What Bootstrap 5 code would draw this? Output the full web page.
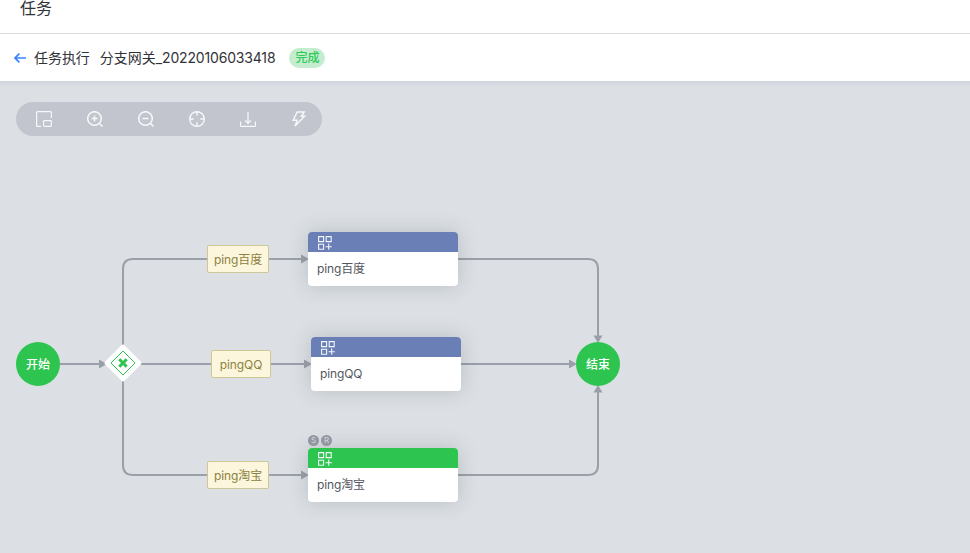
<!DOCTYPE html>
<html lang="zh-CN">
<head>
<meta charset="utf-8">
<meta name="viewport" content="width=device-width, initial-scale=1">
<title>任务执行</title>
<link href="https://cdn.jsdelivr.net/npm/bootstrap@5.3.0/dist/css/bootstrap.min.css" rel="stylesheet">
<style>
body { font-family: Inter, "Noto Sans CJK SC", sans-serif; color: #313238; background: #dce0e5; height: 100vh; overflow: hidden; }
.page-title { height: 34px; padding: 0 20px 17px; border-bottom: 1px solid #d9dbdf; font-size: 16px; line-height: 16px; }
.task-bar { height: 47px; padding: 0 14px; font-size: 14px; line-height: 20px; }
.task-bar .crumb { margin-left: 8px; letter-spacing: -.05px; }
.task-bar .task-name { margin-left: 10px; }
.task-bar .serial { letter-spacing: -.17px; }
.status-pill { width: 36px; height: 20px; margin-left: 14px; font-size: 12px; background: #c6ecd0; color: #2dcb56; font-weight: 500; }
.canvas { background: linear-gradient(#d0d5dd, #dce0e5 6px); }
.tools { width: 306px; height: 34px; margin: 21px 0 0 16px; padding: 0 15px 0 20px; background: #c2c5cd; }
.tools svg { fill: none; stroke: #f7f8fa; stroke-width: 1.2; }
.flow { position: absolute; inset: 0; }
.flow > * { position: absolute; }
.wires { left: 0; top: 0; }
.endpoint { width: 44px; height: 44px; background: #2dc550; color: #fff; font-size: 12px; font-weight: 500; line-height: 18px; top: 261px; padding-top: 1px; }
.start { left: 16px; }
.finish { left: 576px; }
.gateway { left: 104px; top: 263px; }
.branch { height: 28px; font-size: 12px; letter-spacing: -.1px; color: #8d8142; background: #fcf7dc; border: 1px solid #cdc796; border-radius: 2px; line-height: 18px; padding-top: 1px; }
.node { width: 150px; height: 54px; border-radius: 4px; background: #fff; box-shadow: 0 0 20px rgba(70,78,80,.24); font-size: 12px; letter-spacing: -.12px; color: #54565f; }
.node .cap { height: 20px; padding-left: 9.5px; padding-top: 1px; border-radius: 4px 4px 0 0; background: #6a7fb6; }
.node .cap.done { background: #2dc550; }
.node .cap svg { fill: none; stroke: #f4f6fa; stroke-width: 1.1; }
.node .label { height: 34px; padding: 0 9px; line-height: 18px; }
.flags { left: 308px; top: 354px; gap: 2px; }
.flag { width: 11px; height: 11px; background: #9196a1; color: #d5d7dd; font-size: 8px; line-height: 11px; }
.l1 { left: 207px; top: 164px; width: 62px; }
.l2 { left: 211px; top: 269px; width: 60px; }
.l3 { left: 207px; top: 380px; width: 62px; }
.n1 { left: 308px; top: 151px; }
.n2 { left: 311px; top: 256px; }
.n3 { left: 308px; top: 367px; }
</style>
</head>
<body class="d-flex flex-column">
<svg class="d-none"><symbol id="plugin" viewBox="0 0 14 14"><path d="M.6.6h5v5h-5zM8.2.6h5v5h-5zM.6 8.2h5v5h-5zM10.700 7.600v6.200M7.600 10.700h6.200"/></symbol></svg>
<header class="page-title bg-white flex-shrink-0">任务</header>
<nav class="task-bar bg-white d-flex align-items-center flex-shrink-0">
  <svg width="12" height="12" viewBox="0 0 12 12" fill="none" stroke="#3a84ff" stroke-width="1.7"><path d="M12 6H1.2M5.4 1.600 1 6l4.400 4.400"/></svg>
  <span class="crumb">任务执行</span>
  <span class="task-name">分支网关<span class="serial">_20220106033418</span></span>
  <span class="status-pill rounded-pill d-flex align-items-center justify-content-center">完成</span>
</nav>
<main class="canvas position-relative flex-grow-1 overflow-hidden">
  <div class="flow">
    <svg class="wires" width="970" height="472" viewBox="0 81 970 472">
      <g fill="none" stroke="#9a9faa" stroke-width="2">
        <path d="M60 364h43M123 364V269q0-10 10-10h172M123 364h185M123 364v101q0 10 10 10h172"/>
        <path d="M458 259h130q10 0 10 10v68M461 364h110M458 475h130q10 0 10-10v-74"/>
      </g>
      <g fill="#9a9faa">
        <path d="M99 359.500v9l8-4.500zM301 254.500v9l8-4.500zM304 359.500v9l8-4.500zM301 470.500v9l8-4.500zM569 359.500v9l8-4.500z"/>
        <path d="M593.500 335.500h9l-4.500 7.500zM593.500 392.500h9l-4.500-7.500z"/>
      </g>
    </svg>
    <div class="endpoint start rounded-circle d-flex align-items-center justify-content-center">开始</div>
    <svg class="gateway" width="38" height="38" viewBox="0 0 38 38">
      <rect x="5.300" y="5.300" width="27.400" height="27.400" rx="2.500" fill="#fff" transform="rotate(45 19 19)"/>
      <path d="M19 7 31 19 19 31 7 19z" fill="none" stroke="#2dc550"/>
      <path d="m15.300 15.300 7.400 7.400m0-7.400-7.400 7.400" stroke="#2dc550" stroke-width="3"/>
    </svg>
    <div class="branch l1 d-flex align-items-center justify-content-center">ping百度</div>
    <div class="branch l2 d-flex align-items-center justify-content-center">pingQQ</div>
    <div class="branch l3 d-flex align-items-center justify-content-center">ping淘宝</div>
    <div class="node n1">
      <div class="cap d-flex align-items-center"><svg width="14" height="14"><use href="#plugin"/></svg></div>
      <div class="label d-flex align-items-center">ping百度</div>
    </div>
    <div class="node n2">
      <div class="cap d-flex align-items-center"><svg width="14" height="14"><use href="#plugin"/></svg></div>
      <div class="label d-flex align-items-center">pingQQ</div>
    </div>
    <div class="node n3">
      <div class="cap done d-flex align-items-center"><svg width="14" height="14"><use href="#plugin"/></svg></div>
      <div class="label d-flex align-items-center">ping淘宝</div>
    </div>
    <div class="flags d-flex">
      <span class="flag rounded-circle text-center">S</span><span class="flag rounded-circle text-center">R</span>
    </div>
    <div class="endpoint finish rounded-circle d-flex align-items-center justify-content-center">结束</div>
  </div>
  <div class="tools position-relative rounded-pill d-flex align-items-center justify-content-between">
    <svg width="16" height="16" viewBox="0 0 16 16"><path d="M15.400 7V1.600a1 1 0 0 0-1-1H1.600a1 1 0 0 0-1 1v12.800a1 1 0 0 0 1 1H5"/><rect x="7.600" y="9.600" width="7.800" height="5.800" rx=".8"/></svg>
    <svg width="16" height="16" viewBox="0 0 16 16" stroke-width="1.5"><g stroke-width="1.5"><circle cx="7.500" cy="7.500" r="6.800"/><path d="M4.500 7.500h6M7.500 4.500v6M12.300 12.300l3.200 3.200"/></g></svg>
    <svg width="16" height="16" viewBox="0 0 16 16"><g stroke-width="1.5"><circle cx="7.500" cy="7.500" r="6.800"/><path d="M4.500 7.500h6M12.300 12.300l3.200 3.200"/></g></svg>
    <svg width="16" height="16" viewBox="0 0 16 16"><g stroke-width="1.4"><circle cx="8" cy="8" r="7.300"/><path d="M8 .7v4M8 11.300v4M.7 8h4M11.300 8h4"/></g></svg>
    <svg width="16" height="16" viewBox="0 0 16 16"><path d="M.6 10.500v3.900a1 1 0 0 0 1 1h12.800a1 1 0 0 0 1-1v-3.900M8 1v11M5 9.400l3 2.900 3-2.900"/></svg>
    <svg width="16" height="16" viewBox="0 0 16 16"><path d="M6.200 1h7.100L10.400 5.300h3.200L4 15l2.200-5.700H2.200z" stroke-width="1.4"/></svg>
  </div>
</main>
<script src="https://cdn.jsdelivr.net/npm/bootstrap@5.3.0/dist/js/bootstrap.bundle.min.js"></script>
</body>
</html>
